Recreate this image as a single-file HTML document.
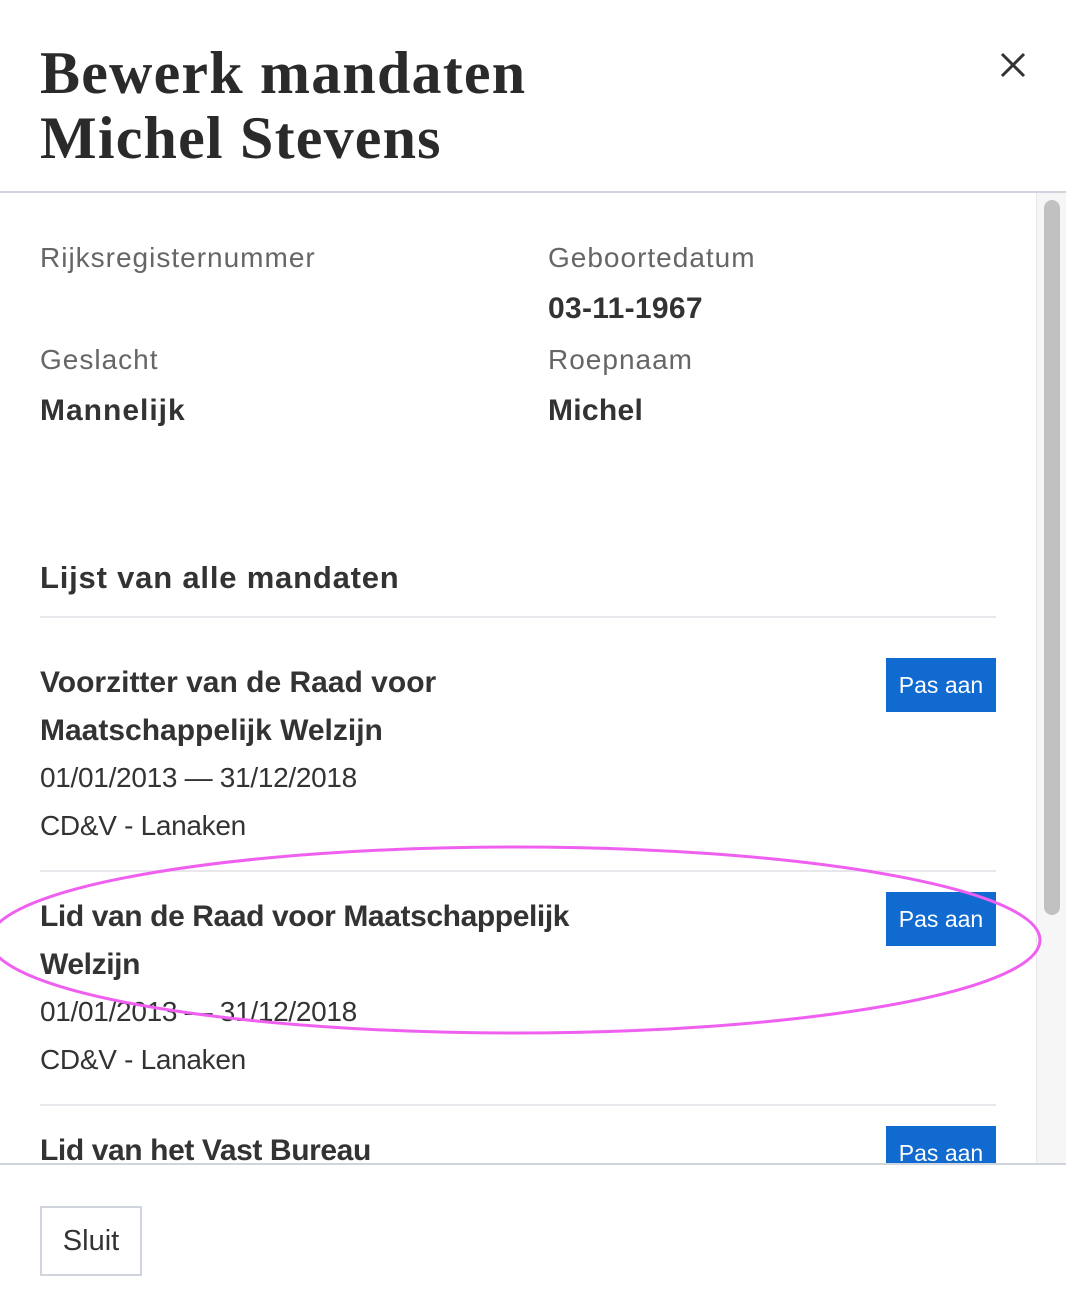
<!DOCTYPE html>
<html><head><meta charset="utf-8"><style>
*{margin:0;padding:0;box-sizing:border-box}
body{width:1066px;height:1316px;background:#fff;font-family:"Liberation Sans",sans-serif;color:#333;position:relative;overflow:hidden}
.t{position:absolute;left:40px;font-family:"Liberation Serif",serif;font-weight:bold;font-size:60px;color:#2a2a2a;line-height:64px;letter-spacing:1.2px}
.l{position:absolute;font-size:28px;color:#666;letter-spacing:1px}
.v{position:absolute;font-size:30px;font-weight:bold;color:#333;letter-spacing:0.3px}
.h{position:absolute;left:40px;font-size:30px;font-weight:bold;color:#333;letter-spacing:-0.4px;line-height:48px}
.n{position:absolute;left:40px;font-size:28px;color:#333;letter-spacing:-0.3px}
.b{position:absolute;left:886px;width:110px;height:54px;background:#106ad0;color:#fff;font-size:23px;line-height:54px;text-align:center}
.hr{position:absolute;left:40px;width:956px;height:2px;background:#e8e8ec}
</style></head><body>
<div class="t" style="top:41px">Bewerk mandaten</div>
<div class="t" style="top:106px">Michel Stevens</div>
<svg style="position:absolute;left:1000px;top:52px" width="26" height="26"><path d="M2 2L24 24M24 2L2 24" stroke="#333" stroke-width="3"/></svg>
<div style="position:absolute;left:0;top:191px;width:1066px;height:2px;background:#cfd4dd"></div>
<div style="position:absolute;left:1036px;top:193px;width:30px;height:971px;background:#f6f6f6;border-left:1px solid #e8e8e8"></div>
<div style="position:absolute;left:1044px;top:200px;width:16px;height:715px;background:#c1c1c1;border-radius:8px"></div>
<div class="l" style="left:40px;top:242px">Rijksregisternummer</div>
<div class="l" style="left:548px;top:242px">Geboortedatum</div>
<div class="v" style="left:548px;top:292px">03-11-1967</div>
<div class="l" style="left:40px;top:344px">Geslacht</div>
<div class="l" style="left:548px;top:344px">Roepnaam</div>
<div class="v" style="left:40px;top:394px;letter-spacing:1px">Mannelijk</div>
<div class="v" style="left:548px;top:394px">Michel</div>
<div class="v" style="left:40px;top:560px;font-size:31px;letter-spacing:0.8px">Lijst van alle mandaten</div>
<div class="hr" style="top:616px"></div>
<div class="h" style="top:659px;letter-spacing:0px">Voorzitter van de Raad voor<br>Maatschappelijk Welzijn</div>
<div class="n" style="top:762px">01/01/2013 — 31/12/2018</div>
<div class="n" style="top:810px">CD&amp;V - Lanaken</div>
<div class="b" style="top:658px">Pas aan</div>
<div class="hr" style="top:870px"></div>
<div class="h" style="top:893px">Lid van de Raad voor Maatschappelijk<br>Welzijn</div>
<div class="n" style="top:996px">01/01/2013 — 31/12/2018</div>
<div class="n" style="top:1044px">CD&amp;V - Lanaken</div>
<div class="b" style="top:892px">Pas aan</div>
<div class="hr" style="top:1104px"></div>
<div style="position:absolute;left:0;top:1106px;width:1036px;height:58px;overflow:hidden">
<div class="h" style="top:21px">Lid van het Vast Bureau</div>
<div class="b" style="top:20px">Pas aan</div>
</div>
<div style="position:absolute;left:0;top:1163px;width:1066px;height:2px;background:#cfd4dd"></div>
<div style="position:absolute;left:40px;top:1206px;width:102px;height:70px;border:2px solid #cfd4dd;font-size:29px;line-height:66px;text-align:center;color:#333">Sluit</div>
<svg style="position:absolute;left:0;top:0" width="1066" height="1316"><ellipse cx="515" cy="940" rx="525" ry="93" fill="none" stroke="#f060f0" stroke-width="3"/></svg>
</body></html>
